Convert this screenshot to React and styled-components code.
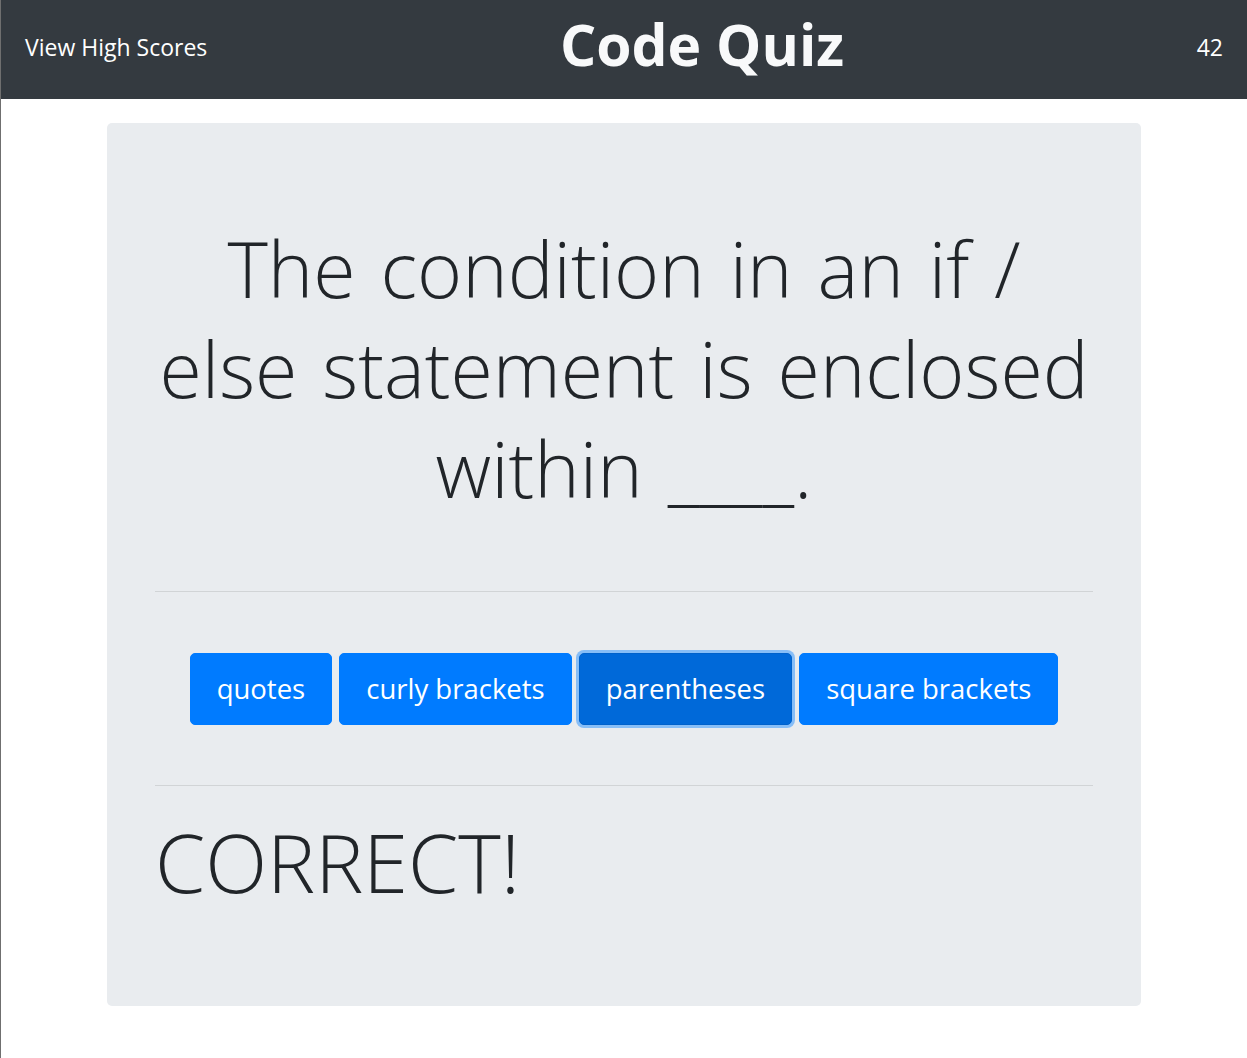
import React from "react";
import styled, { createGlobalStyle } from "styled-components";

const choices = ["quotes", "curly brackets", "parentheses", "square brackets"];
const picked = "parentheses";

const App = () => {
  return (
    <Page>
      <GlobalStyle />
      <Header>
        <ScoresLink>View High Scores</ScoresLink>
        <Title>Code Quiz</Title>
        <Timer>42</Timer>
      </Header>
      <Jumbotron>
        <Question>The condition in an if / else statement is enclosed within ____.</Question>
        <Divider />
        <Choices>
          {choices.map((c) => (
            <Choice key={c} $active={c === picked}>
              {c}
            </Choice>
          ))}
        </Choices>
        <Divider />
        <Result>CORRECT!</Result>
      </Jumbotron>
    </Page>
  );
};

export default App;

const GlobalStyle = createGlobalStyle`
  body {
    margin: 0;
    background: #fff;
    font-family: "Open Sans", "Noto Sans", sans-serif;
    color: #212529;
  }
`;

const Page = styled.div`
  min-height: 100vh;
  border-left: 1px solid #6f6f6f;
  box-sizing: border-box;
  padding-bottom: 24px;
`;

const Header = styled.header`
  display: flex;
  align-items: center;
  justify-content: space-between;
  height: 99px;
  padding: 0 24px 6px;
  box-sizing: border-box;
  background: #343a40;
  color: #fff;
`;

const ScoresLink = styled.span`
  font-size: 23px;
  cursor: pointer;
`;

const Title = styled.h1`
  margin: 0 0 6px;
  font-size: 57px;
  font-weight: 700;
  color: #f8f9fa;
`;

const Timer = styled.span`
  font-size: 23px;
`;

const Jumbotron = styled.main`
  width: 83%;
  margin: 24px auto 0;
  padding: 96px 48px 94px;
  box-sizing: border-box;
  background: #e9ecef;
  border-radius: 5px;
`;

const Question = styled.h2`
  margin: 0;
  font-size: 77px;
  font-weight: 300;
  word-spacing: 5px;
  line-height: 100px;
  text-align: center;
`;

const Divider = styled.hr`
  margin: 72px 0 0;
  border: 0;
  border-top: 1px solid rgba(0, 0, 0, 0.1);
`;

const Choices = styled.div`
  display: flex;
  justify-content: center;
  gap: 7px;
  margin: 61px 0 60px;
  & + ${Divider} {
    margin-top: 0;
  }
`;

const Choice = styled.button`
  padding: 14px 26px;
  font-family: inherit;
  font-size: 27.5px;
  line-height: 42px;
  color: #fff;
  background: ${(p) => (p.$active ? "#0069d9" : "#007bff")};
  border: 1px solid ${(p) => (p.$active ? "#0062cc" : "#007bff")};
  border-radius: 5px;
  box-shadow: ${(p) => (p.$active ? "0 0 0 3px rgba(38, 143, 255, 0.5)" : "none")};
  cursor: pointer;
`;

const Result = styled.p`
  margin: 26px 0 0;
  font-size: 81px;
  font-weight: 300;
  line-height: 100px;
`;
